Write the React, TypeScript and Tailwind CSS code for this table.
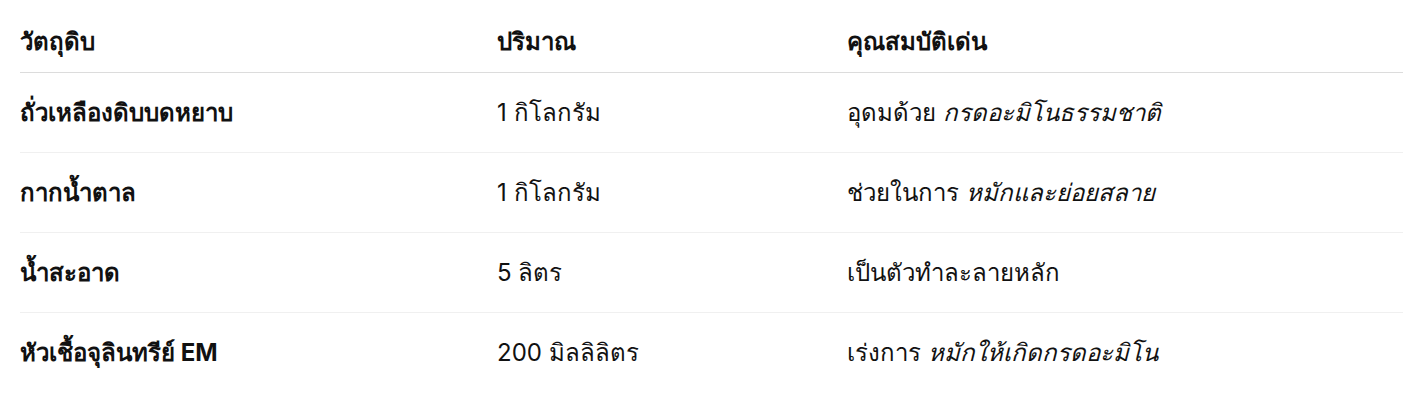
const rows = [
  { name: 'ถั่วเหลืองดิบบดหยาบ', qty: '1 กิโลกรัม', plain: 'อุดมด้วย', em: 'กรดอะมิโนธรรมชาติ' },
  { name: 'กากน้ำตาล', qty: '1 กิโลกรัม', plain: 'ช่วยในการ', em: 'หมักและย่อยสลาย' },
  { name: 'น้ำสะอาด', qty: '5 ลิตร', plain: 'เป็นตัวทำละลายหลัก', em: '' },
  { name: 'หัวเชื้อจุลินทรีย์ EM', qty: '200 มิลลิลิตร', plain: 'เร่งการ', em: 'หมักให้เกิดกรดอะมิโน' },
]

export default function App() {
  return (
    <div className="min-h-[410px] bg-white pt-[24px] pl-[20px] font-['Inter',sans-serif] text-[24px] leading-[36px] text-[#111]">
      <table className="w-[1383px] border-collapse text-left">
        <thead>
          <tr className="border-b border-[#dcdcdc]">
            <th className="w-[477px] pb-[12px] align-middle font-bold">วัตถุดิบ</th>
            <th className="w-[350px] pb-[12px] align-middle font-bold">ปริมาณ</th>
            <th className="pb-[12px] align-middle font-bold">คุณสมบัติเด่น</th>
          </tr>
        </thead>
        <tbody>
          {rows.map((r, i) => (
            <tr key={r.name} className={i < rows.length - 1 ? 'h-[80px] border-b border-[#f0f0f0]' : 'h-[80px]'}>
              <td className="font-bold">{r.name}</td>
              <td>{r.qty}</td>
              <td>
                {r.plain}
                {r.em && (
                  <>
                    {' '}
                    <em>{r.em}</em>
                  </>
                )}
              </td>
            </tr>
          ))}
        </tbody>
      </table>
    </div>
  )
}
